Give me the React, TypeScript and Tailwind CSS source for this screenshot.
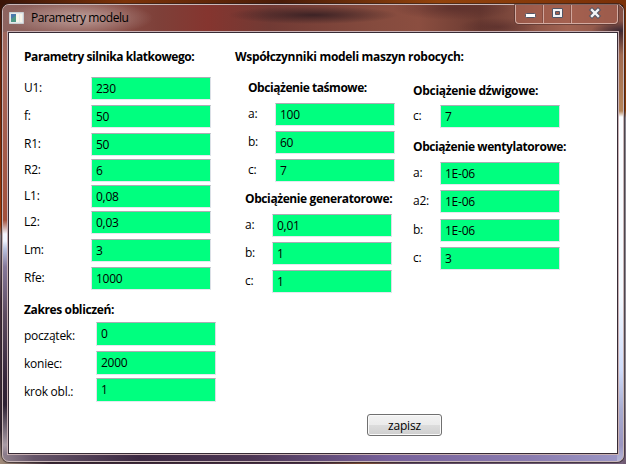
import React from "react";

type FieldProps = { label: string; value: string; gap?: string; labelWidth: string; shift?: string; height?: string; valueShift?: string };

function Field({ label, value, gap = "mt-[5px]", labelWidth, shift = "pt-[3px]", height = "h-[23px]", valueShift = "pt-[3px]" }: FieldProps) {
  return (
    <label className={`flex ${gap} ${height}`}>
      <span className={`${labelWidth} ${shift} shrink-0 leading-4 tracking-[-0.25px]`}>{label}</span>
      <span className={`block w-[120px] shrink-0 border border-t-[#abadb3] border-r-[#dbdfe6] border-b-[#e3e9ef] border-l-[#e2e3ea] bg-[#00ff7f] pl-[4px] leading-4 tracking-[-0.25px] ${valueShift}`}>{value}</span>
    </label>
  );
}

function Heading({ children, className = "tracking-[-0.45px]" }: { children: React.ReactNode; className?: string }) {
  return <h2 className={`h-4 font-bold leading-4 whitespace-nowrap ${className}`}>{children}</h2>;
}

function WindowButtons() {
  return (
    <div className="mr-[5px] flex h-[19px] w-[103px] rounded-b-[4px] border border-t-0 border-[#d3aaa0] bg-[#a5604f]/70 shadow-[0_0_0_1px_#50302d99]">
      <svg width="101" height="18" viewBox="0 0 101 18">
        <path d="M27.500 0v18M55.500 0v18" stroke="#d0a59b" />
        <path d="M26.500 0v18M54.500 0v18" stroke="#70423a88" />
        <rect x="9.500" y="8.500" width="10" height="4" rx="1" fill="#fff" stroke="#535666" />
        <path fillRule="evenodd" d="M36.500 3.500h10v9h-10zM39.500 6.500v3h4v-3z" fill="#f4f4f6" stroke="#535666" />
        <path d="M76 5l6 6M82 5l-6 6" stroke="#535666" strokeWidth="4.400" strokeLinecap="square" />
        <path d="M76 5l6 6M82 5l-6 6" stroke="#f4f4f6" strokeWidth="2.400" strokeLinecap="square" />
      </svg>
    </div>
  );
}

export default function App() {
  return (
    <main className="h-[464px] w-[626px] overflow-hidden pt-[4px] pl-[2px] font-['Open_Sans','Noto_Sans',sans-serif] text-[12px] text-black [background:linear-gradient(180deg,#7a3008_0px,#8a3a0a_110px,#85808a_118px,#8a8490_400px,#6f5a72_464px)_right_/_3px_100%_no-repeat,linear-gradient(90deg,#3a1408,#7d3309_20%,#4a1c08_45%,#93430c_70%,#7a3008)_top_/_100%_5px_no-repeat,linear-gradient(90deg,#a08a78_0%,#3b2636_8%,#4a3048_50%,#7b4a30_58%,#5d4762_65%,#75607a_100%)_bottom_/_100%_4px_no-repeat,linear-gradient(180deg,#3a1408_0%,#6a2206_60px,#a63c08_225px,#8c7f88_236px,#442d3c_300px,#332331_430px,#b09a84_464px)]">
      <section className="flex h-[458px] w-[622px] flex-col rounded-[7px] border border-[#c9b7b9] shadow-[0_0_0_1px_#28202399] [background:linear-gradient(180deg,#4a2c30_0px,#4a2c30_28px,#a06a50_50px,#b5855a_106px,#fbfdff_112px,#f3faff_290px,#cfdcfa_365px,#a8acd0_405px,#9a95c0_440px,#b8bada_458px)_right_/_6px_100%_no-repeat,linear-gradient(90deg,#8f808c_0%,#655468_5%,#3c2942_22%,#4d3654_40%,#77609a_62%,#8b7cb0_85%,#9d98c6_100%)_bottom_/_100%_6px_no-repeat,linear-gradient(180deg,#97675f_0px,#a8685c_60px,#a4503b_215px,#f4f6ff_229px,#f0f4ff_236px,#bac3e0_244px,#85789a_262px,#5d4b60_310px,#35253a_375px,#2d2133_400px,#aa9ca6_440px,#6d5d72_458px)]">
        <header className="flex h-[27px] shrink-0 justify-between rounded-t-[6px] [background:radial-gradient(ellipse_74px_18px_at_76px_13px,#c4aaa6dd,transparent),radial-gradient(ellipse_85px_9px_at_310px_10px,#2d1b20cc,transparent),radial-gradient(ellipse_60px_12px_at_450px_3px,#4d262699,transparent),radial-gradient(ellipse_40px_9px_at_495px_22px,#4d262688,transparent),radial-gradient(ellipse_30px_10px_at_618px_26px,#2e2230dd,transparent),linear-gradient(90deg,#8d6460_0%,#8b544d_14%,#7e4039_25%,#85352f_33%,#713a34_43%,#854b3e_60%,#8b4e40_67%,#6b3b32_77%,#a16352_91%,#855044_100%)]">
          <div className="flex pt-[5px] pl-[6px]">
            <svg width="15" height="12" viewBox="0 0 15 12" className="mt-[2px] mr-[7px]">
              <path d="M.5.5h14v11H.5z" fill="#e5e8e9" stroke="#c9cfd3" />
              <path d="M2 2h7v8H2z" fill="#4e9785" />
              <path d="M2 2h7L2 7z" fill="#4978ad" />
              <path d="M7 2h3v8H7zM11 2h2v8h-2z" fill="#f7f5e9" />
            </svg>
            <h1 className="h-4 leading-4 tracking-[-0.43px]">Parametry modelu</h1>
          </div>
          <WindowButtons />
        </header>
        <div className="ml-[5px] flex h-[422px] w-[610px] flex-col border border-[#372b35] bg-white shadow-[0_0_0_1px_#c9b1b4]">
          <div className="flex h-[372px]">
            <div className="w-[211px] pt-[16px] pl-[15px]">
              <Heading className="tracking-[-0.44px]">Parametry silnika klatkowego:</Heading>
              <Field label="U1:" value="230" labelWidth="w-[67px]" gap="mt-[12px]" />
              <Field label="f:" value="50" labelWidth="w-[67px]" />
              <Field label="R1:" value="50" labelWidth="w-[67px]" />
              <Field label="R2:" value="6" labelWidth="w-[67px]" gap="mt-[3px]" />
              <Field label="L1:" value="0,08" labelWidth="w-[67px]" gap="mt-[3px]" />
              <Field label="L2:" value="0,03" labelWidth="w-[67px]" gap="mt-[3px]" />
              <Field label="Lm:" value="3" labelWidth="w-[67px]" />
              <Field label="Rfe:" value="1000" labelWidth="w-[67px]" />
              <Heading className="mt-[12px] tracking-[-0.38px]">Zakres obliczeń:</Heading>
              <Field label="początek:" value="0" labelWidth="w-[72px]" gap="mt-[4px]" height="h-[24px]" shift="pt-[6px]" />
              <Field label="koniec:" value="2000" labelWidth="w-[72px]" height="h-[24px]" shift="pt-[5px]" />
              <Field label="krok obl.:" value="1" labelWidth="w-[72px]" gap="mt-[3px]" height="h-[24px]" shift="pt-[6px]" />
            </div>
            <div className="pt-[16px] pl-[15px]">
              <Heading className="tracking-[-0.31px]">Współczynniki modeli maszyn robocych:</Heading>
              <div className="flex">
                <div className="w-[178px]">
                  <div className="pt-[15px] pl-[13px]">
                    <Heading>Obciążenie taśmowe:</Heading>
                    <Field label="a:" value="100" labelWidth="w-[27px]" gap="mt-[7px]" />
                    <Field label="b:" value="60" labelWidth="w-[27px]" />
                    <Field label="c:" value="7" labelWidth="w-[27px]" />
                  </div>
                  <div className="pt-[9px] pl-[10px]">
                    <Heading className="tracking-[-0.4px]">Obciążenie generatorowe:</Heading>
                    <Field label="a:" value="0,01" labelWidth="w-[27px]" gap="mt-[7px]" />
                    <Field label="b:" value="1" labelWidth="w-[27px]" />
                    <Field label="c:" value="1" labelWidth="w-[27px]" />
                  </div>
                </div>
                <div className="pt-[18px]">
                  <Heading className="tracking-[-0.31px]">Obciążenie dźwigowe:</Heading>
                  <Field label="c:" value="7" labelWidth="w-[27px]" gap="mt-[6px]" />
                  <Heading className="mt-[11px] tracking-[-0.42px]">Obciążenie wentylatorowe:</Heading>
                  <Field label="a:" value="1E-06" labelWidth="w-[27px]" gap="mt-[7px]" />
                  <Field label="a2:" value="1E-06" labelWidth="w-[27px]" />
                  <Field label="b:" value="1E-06" labelWidth="w-[27px]" gap="mt-[6px]" />
                  <Field label="c:" value="3" labelWidth="w-[27px]" />
                </div>
              </div>
            </div>
          </div>
          <button className="mt-[9px] ml-[358px] h-[22px] w-[75px] rounded-[3px] border border-[#707070] bg-[linear-gradient(180deg,#f2f2f2_0%,#ebebeb_50%,#dddddd_50%,#cfcfcf_100%)] pt-[2px] leading-4 tracking-[-0.15px] shadow-[inset_0_0_0_1px_#fafafa]">zapisz</button>
        </div>
      </section>
    </main>
  );
}
